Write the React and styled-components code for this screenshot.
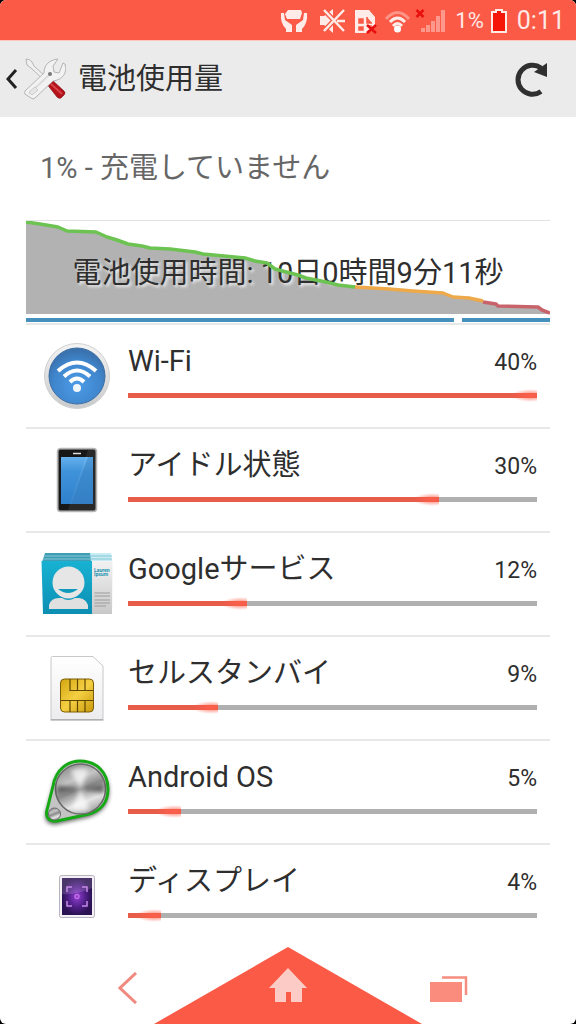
import React from 'react';
import styled, { createGlobalStyle } from 'styled-components';

const GlobalStyle = createGlobalStyle`
  * {
    box-sizing: border-box;
  }

  body {
    margin: 0;
    background: #000;
    color: #2e2e2e;
    font-family: Roboto, 'Noto Sans CJK JP', sans-serif;
  }

  button {
    padding: 0;
    border: 0;
    background: none;
    cursor: pointer;
  }

  svg {
    display: block;
  }
`;

const Screen = styled.div`
  display: flex;
  flex-direction: column;
  min-height: 100vh;
  overflow: hidden;
  background: #fff;
  border-radius: 6px;
`;

const StatusBar = styled.div`
  display: flex;
  align-items: center;
  justify-content: flex-end;
  height: 40px;
  padding: 2px 11px 0 0;
  background: #fa5a46;
  color: #ffe9e6;
`;

const StatusText = styled.span`
  font-size: ${({ $large }) => ($large ? '25px' : '22px')};
  line-height: 38px;
`;

const StatusIcons = styled.svg`
  flex: none;
  margin-right: 8px;
`;

const BatteryIcon = styled.svg`
  flex: none;
  margin: 0 10px 0 7px;
`;

const Header = styled.header`
  display: flex;
  align-items: center;
  height: 77px;
  padding: 0 28px 0 6px;
  border-top: 1px solid #fbc4bd;
  background: #ebebeb;
`;

const UpButton = styled.button`
  display: flex;
  align-items: center;
  gap: 6px;
`;

const Title = styled.h1`
  flex: 1;
  margin: 0 0 0 12px;
  font-size: 29px;
  font-weight: 400;
  line-height: 40px;
`;

const Main = styled.main`
  flex: 1;
  padding: 0 26px;
`;

const Summary = styled.p`
  margin: 0;
  padding: 31px 14px;
  color: #666;
  font-size: 29px;
  line-height: 41px;
`;

const History = styled.section`
  position: relative;
  height: 103px;
  border-top: 1px solid #e2e2e2;
`;

const HistoryLabel = styled.h2`
  position: relative;
  margin: 0;
  padding-top: 32px;
  font-size: 29px;
  font-weight: 400;
  line-height: 40px;
  text-align: center;
  text-shadow: 2px 2px 3px rgba(255, 255, 255, 0.8);
`;

const HistoryLayer = styled.svg`
  position: absolute;
  inset: 0;
  width: 100%;
  height: 102px;
`;

const List = styled.ul`
  margin: 0;
  padding: 0;
  list-style: none;
`;

const Row = styled.li`
  display: grid;
  grid-template-columns: 102px 1fr;
  align-items: center;
  height: 104px;
  padding-right: 13px;
  border-top: 2px solid #e8e8e8;
`;

const IconBox = styled.div`
  display: flex;
  justify-content: center;
`;

const Line = styled.div`
  display: flex;
  align-items: center;
  justify-content: space-between;
  margin-bottom: 12px;
`;

const Name = styled.span`
  font-size: 29px;
  line-height: 40px;
`;

const Percent = styled.span`
  padding-top: 4px;
  font-size: 23px;
  line-height: 36px;
`;

const Track = styled.div`
  height: 5px;
  margin-bottom: 14px;
  background: #b0b0b0;
`;

const Fill = styled.div`
  position: relative;
  height: 100%;
  background: #e85c4a;

  &::after {
    content: '';
    position: absolute;
    top: -4px;
    right: 0;
    width: 26px;
    height: 13px;
    background: radial-gradient(ellipse at 75% 50%, rgba(255, 95, 74, 0.9), rgba(255, 95, 74, 0) 70%);
  }
`;

const NavBar = styled.nav`
  display: grid;
  grid-template-columns: 1fr 268px 1fr;
  height: 77px;
`;

const NavButton = styled.button`
  display: flex;
  align-items: center;
  justify-content: ${({ $side }) => ($side === 'left' ? 'flex-end' : 'flex-start')};
  padding: ${({ $side }) => ($side === 'left' ? '4px 16px 0 0' : '6px 0 0 8px')};
`;

const HomeButton = styled.button`
  display: block;
`;

const WifiIcon = () => (
  <svg width="72" height="72" viewBox="0 0 72 72">
    <defs>
      <linearGradient id="ring" x1="0" y1="0" x2="0" y2="1">
        <stop offset="0" stopColor="#f4f4f4" />
        <stop offset="1" stopColor="#c9cacc" />
      </linearGradient>
      <radialGradient id="disc" cx=".5" cy=".65" r=".6">
        <stop offset="0" stopColor="#4c9be6" />
        <stop offset=".7" stopColor="#3f86cd" />
        <stop offset="1" stopColor="#3a72ae" />
      </radialGradient>
    </defs>
    <circle cx="36" cy="36" r="32.5" fill="url(#ring)" stroke="#d0d0d0" />
    <circle cx="36" cy="36" r="28" fill="url(#disc)" stroke="#3c6da3" />
    <g fill="none" stroke="#fff" strokeWidth="4">
      <path d="M17 31q19-17 38 0" />
      <path d="M23 36.500q13-12 26 0" />
      <path d="M29 42q7-7 14 0" />
    </g>
    <circle cx="36" cy="48" r="4" fill="#f1f6fb" />
  </svg>
);

const PhoneIcon = () => (
  <svg width="72" height="72" viewBox="0 0 72 72">
    <defs>
      <linearGradient id="glass" x1="0" y1="0" x2="0" y2="1">
        <stop offset="0" stopColor="#66b1ee" />
        <stop offset=".3" stopColor="#3f93da" />
        <stop offset="1" stopColor="#2f80cc" />
      </linearGradient>
    </defs>
    <rect x="16.500" y="4.500" width="39" height="63" rx="3" fill="#555" stroke="#b5b5b5" strokeWidth="1.500" />
    <rect x="18" y="6" width="36" height="60" rx="1" fill="#171717" />
    <rect x="20" y="13" width="32" height="47" fill="url(#glass)" />
    <path d="M47 6h7v60H27z" fill="#fff" opacity=".08" />
    <path d="M47 13h5v47H30z" fill="#1f6cb5" opacity=".35" />
    <path d="M32 9.500h8" stroke="#ddd" strokeWidth="1.500" />
  </svg>
);

const ContactsIcon = () => (
  <svg width="72" height="72" viewBox="0 0 72 72">
    <defs>
      <linearGradient id="card" x1="0" y1="0" x2="0" y2="1">
        <stop offset="0" stopColor="#18b2d3" />
        <stop offset="1" stopColor="#0c8eb2" />
      </linearGradient>
      <linearGradient id="paper" x1="0" y1="0" x2="0" y2="1">
        <stop offset="0" stopColor="#f2f2f2" />
        <stop offset="1" stopColor="#c8c8c8" />
      </linearGradient>
    </defs>
    <path d="M4 5h66v9H1z" fill="#3f9eb4" />
    <path d="M49 5h21l1 9H50z" fill="#c8ecf3" />
    <path d="M3 8h68M2 11h69" stroke="#83c6d4" />
    <path d="M.5 13H51v53H2z" fill="url(#card)" />
    <path d="M51 13h20.500L71 66H51z" fill="url(#paper)" />
    <circle cx="27.500" cy="34.500" r="16" fill="#e6e6e6" />
    <path d="M17 41h20q-10 8-20 0" fill="#109bbc" />
    <path d="M8 61v-4q2-7 10-7h3q6 4 13 0h4q7 1 9 7v4z" fill="#e0e0e0" />
    <text x="53" y="24" fill="#1992b0" fontSize="5" fontWeight="700">Lauren</text>
    <text x="53" y="28" fill="#1992b0" fontSize="5" fontWeight="700">Ipsum</text>
    <path d="M53.500 45H69M53.500 48H69M53.500 52H69M53.500 55H69M53.500 58H65" stroke="#9b9b9b" strokeWidth="1.200" />
  </svg>
);

const SimIcon = () => (
  <svg width="72" height="72" viewBox="0 0 72 72">
    <defs>
      <linearGradient id="sim" x1="0" y1="0" x2="0" y2="1">
        <stop offset="0" stopColor="#fff" />
        <stop offset="1" stopColor="#ececee" />
      </linearGradient>
      <linearGradient id="gold" x1="0" y1="0" x2="1" y2="1">
        <stop offset="0" stopColor="#d3a50f" />
        <stop offset=".5" stopColor="#f5cf43" />
        <stop offset="1" stopColor="#c99a0a" />
      </linearGradient>
    </defs>
    <path d="M10 67.500V6q0-1.500 1.500-1.500H52L62 14v53.500z" fill="url(#sim)" stroke="#c8c8c8" />
    <path d="M9.500 68h53" stroke="#999" />
    <rect x="19.500" y="27" width="33" height="33" rx="4" fill="url(#gold)" stroke="#7a5c06" />
    <path d="M29 27v11.500h23M36.500 27v11.500M44 27v11.500M20 48.500h32M29 48.500V60M36.500 48.500V60M44 48.500V60" fill="none" stroke="#5e4703" strokeWidth="1.200" />
  </svg>
);

const SystemIcon = () => (
  <svg width="72" height="72" viewBox="0 0 72 72">
    <defs>
      <linearGradient id="metal" x1=".3" y1="0" x2=".7" y2="1">
        <stop offset="0" stopColor="#8a8a8a" />
        <stop offset=".3" stopColor="#c4c4c4" />
        <stop offset=".5" stopColor="#8b8b8b" />
        <stop offset=".75" stopColor="#e4e4e4" />
        <stop offset="1" stopColor="#999" />
      </linearGradient>
      <filter id="shade" x="-20%" y="-20%" width="140%" height="140%">
        <feGaussianBlur stdDeviation="2" />
      </filter>
    </defs>
    <path d="M12 31C15 14 27 7 39 7c17 0 29 12 29 28 0 14-8 22-20 26l-32 7C6 70 3 63 5 56z" fill="#333" opacity=".8" filter="url(#shade)" />
    <path d="M12 30C15 13 27 5 39 5c17 0 28 12 28 28 0 14-8 22-19 25l-32 7C8 66 4 61 6 54z" fill="#c4c4c4" stroke="#16a916" strokeWidth="3" />
    <circle cx="39.500" cy="33" r="25" fill="url(#metal)" stroke="#666" strokeWidth="1.500" />
    <g filter="url(#shade)">
      <path d="M39.500 33 16 38q-1-5 0-9zM39.500 33l23-5q1 5 0 9z" fill="#333" opacity=".6" />
      <path d="m39.500 33-10-18q9-5 18-1zM39.500 33l-9 20q9 4 18 0z" fill="#fff" opacity=".7" />
    </g>
    <circle cx="13.500" cy="58" r="6" fill="url(#metal)" stroke="#666" />
  </svg>
);

const DisplayIcon = () => (
  <svg width="72" height="72" viewBox="0 0 72 72">
    <defs>
      <radialGradient id="glow">
        <stop offset="0" stopColor="#8f3fd0" />
        <stop offset=".6" stopColor="#4e1e85" />
        <stop offset="1" stopColor="#2b1252" />
      </radialGradient>
    </defs>
    <rect x="18.500" y="15.500" width="35" height="42" rx="2" fill="#f3f0f6" stroke="#b8b2bf" />
    <rect x="21" y="18" width="30" height="37" fill="url(#glow)" />
    <path d="M21 18h30v10q-15 7-30 6z" fill="#fff" opacity=".15" />
    <path d="M26 32v-5h5M41 27h5v5M46 41v5h-5M31 46h-5v-5" fill="none" stroke="#c58ae6" strokeWidth="1.500" />
    <circle cx="36" cy="36.500" r="2" fill="none" stroke="#c46ae6" strokeWidth="1.500" />
  </svg>
);

const ToolsIcon = () => (
  <svg width="42" height="42" viewBox="0 0 42 42">
    <path d="M2 1q4 0 6 3l2 4 13 12-2 3L7 10 3 7z" fill="#f0f0f0" stroke="#a5a5a5" strokeWidth=".8" />
    <path d="m22 25 5-4 13 12q2 2 0 4l-3 3q-2 1-4-1z" fill="#b5121b" stroke="#7b1015" strokeWidth=".6" />
    <path d="m27 26 11 10" stroke="#d8434a" strokeWidth="2" />
    <path d="M1 33 20 15C20 7 25 2 34 1l-5 7 1 6 5 1 4-10 2 1c3 9-3 16-12 17L11 40q-2 2-4 0l-6-4q-1-1 0-3z" fill="#f2f2f2" stroke="#a5a5a5" strokeWidth=".8" />
    <path d="M5 36 25 17" stroke="#dcdcdc" strokeWidth="2" />
    <circle cx="26" cy="16" r="2" fill="#777" />
    <path d="m5 34 6-5 3 3-6 5z" fill="#e6e6e6" stroke="#b5b5b5" strokeWidth=".6" />
  </svg>
);

const items = [
  { name: 'Wi-Fi', percent: 40, bar: 100, Icon: WifiIcon },
  { name: 'アイドル状態', percent: 30, bar: 76, Icon: PhoneIcon },
  { name: 'Googleサービス', percent: 12, bar: 29, Icon: ContactsIcon },
  { name: 'セルスタンバイ', percent: 9, bar: 22, Icon: SimIcon },
  { name: 'Android OS', percent: 5, bar: 13, Icon: SystemIcon },
  { name: 'ディスプレイ', percent: 4, bar: 8, Icon: DisplayIcon },
];

// battery level over time, split by the colour of each stretch
const levels = {
  good: '0,1 14,3 32,6 41,10 70,11 81,16 91,19 102,23 116,25 124,27 144,28 169,31 177,33 219,37 229,40 241,42 249,48 264,52 272,54 280,57 300,61 312,64 329,66',
  low: '329,66 363,68 387,70 417,72 427,76 443,77 457,80',
  critical: '457,81 470,83 472,85 512,86 516,89 524,92',
};

const App = () => (
  <>
    <GlobalStyle />
    <Screen>
      <StatusBar>
        <StatusIcons width="168" height="26" viewBox="280 7 168 26" aria-hidden="true">
          <g fill="#ffece9">
            <path d="M289 9h13l1 3-2 6h-13l-2-5z" />
            <path d="M282 12h3l1 7 7 5v7h-6v-3q-6-6-5-16zM308 12h-3l-1 7-7 5v7h6v-3q6-6 5-16z" />
            <path d="M321 15h4l9-7v24l-9-8h-4z" />
            <path d="M356 9h14l6 7v8l-9 8h-11z" />
          </g>
          <path d="m324 8 22 23M346 8l-22 23" stroke="#fa5a46" strokeWidth="5" />
          <path d="m325 9 20 21M345 9l-20 21M338 20h8" stroke="#ffece9" strokeWidth="2.500" />
          <path d="M360 18h4v4h-4zM368 16v6h5M360 26h4v3h-4zM368 25h5" fill="#fa5a46" stroke="#fa5a46" strokeWidth="1.500" />
          <path d="m368 24 9 8M377 24l-9 8M417.500 9l7 7M424.500 9l-7 7" stroke="#e80f10" strokeWidth="2.500" />
          <g fill="none" stroke="#ffece9" strokeWidth="3">
            <path d="M387 18q11.500-13 23 0" opacity=".4" />
            <path d="M391 21q7.500-8 15 0" />
            <path d="M394 25q4.500-5 9 0" />
          </g>
          <circle cx="398.500" cy="28" r="3.500" fill="#fff" />
          <path d="M422 27h4v4h-4zM427 24h4v7h-4zM432 20h4v11h-4zM437 15h4v16h-4zM442 9h4v22h-4z" fill="#fff" opacity=".38" />
        </StatusIcons>
        <StatusText>1%</StatusText>
        <BatteryIcon width="16" height="24" viewBox="0 0 16 24" aria-hidden="true">
          <path d="M5 3V1h6v2h4v20H1V3z" fill="#f51608" stroke="#ffeae6" strokeWidth="2" />
        </BatteryIcon>
        <StatusText $large>0:11</StatusText>
      </StatusBar>

      <Header>
        <UpButton aria-label="戻る">
          <svg width="12" height="20" viewBox="0 0 12 20">
            <path d="m10 1-8 9 8 9" fill="none" stroke="#222" strokeWidth="3" />
          </svg>
          <ToolsIcon />
        </UpButton>
        <Title>電池使用量</Title>
        <button aria-label="更新">
          <svg width="34" height="36" viewBox="0 0 34 36">
            <path d="M27 30.500A14.500 14.500 0 1 1 27 7" fill="none" stroke="#303030" strokeWidth="5" />
            <path d="M33 2v14l-13-5z" fill="#303030" />
          </svg>
        </button>
      </Header>

      <Main>
        <Summary>1% - 充電していません</Summary>
        <History>
          <HistoryLayer viewBox="0 0 524 102" preserveAspectRatio="none" aria-hidden="true">
            <polygon points={`${levels.good} ${levels.low} ${levels.critical} 524,93 0,93`} fill="#b2b2b2" />
          </HistoryLayer>
          <HistoryLabel>電池使用時間: 10日0時間9分11秒</HistoryLabel>
          <HistoryLayer viewBox="0 0 524 102" preserveAspectRatio="none" aria-hidden="true">
            <g fill="none" strokeWidth="3.500" strokeLinejoin="round">
              <polyline points={levels.good} stroke="#6cc352" />
              <polyline points={levels.low} stroke="#eda94a" />
              <polyline points={levels.critical} stroke="#c9636b" />
            </g>
            <path d="M0 99h428M436 99h88" stroke="#4690bd" strokeWidth="4" />
          </HistoryLayer>
        </History>

        <List>
          {items.map(({ name, percent, bar, Icon }) => (
            <Row key={name}>
              <IconBox aria-hidden="true">
                <Icon />
              </IconBox>
              <div>
                <Line>
                  <Name>{name}</Name>
                  <Percent>{percent}%</Percent>
                </Line>
                <Track>
                  <Fill style={{ width: `${bar}%` }} />
                </Track>
              </div>
            </Row>
          ))}
        </List>
      </Main>

      <NavBar>
        <NavButton $side="left" aria-label="戻る">
          <svg width="20" height="32" viewBox="0 0 20 32">
            <path d="M18 1 2 16l16 15" fill="none" stroke="#f08a7e" strokeWidth="3" />
          </svg>
        </NavButton>
        <HomeButton aria-label="ホーム">
          <svg width="268" height="77" viewBox="0 0 268 77">
            <path d="M134 0 268 77H0z" fill="#fa5a46" />
            <path d="m134 21 19 20h-5v14h-11V45h-5v10h-11V41h-6z" fill="#fdcbc5" />
          </svg>
        </HomeButton>
        <NavButton $side="right" aria-label="最近使ったアプリ">
          <svg width="38" height="26" viewBox="0 0 38 26">
            <path d="M0 6h32v20H0z" fill="#fa8c7d" />
            <path d="M12 1.500h24V19" fill="none" stroke="#f58d80" strokeWidth="2.500" />
          </svg>
        </NavButton>
      </NavBar>
    </Screen>
  </>
);

export default App;
